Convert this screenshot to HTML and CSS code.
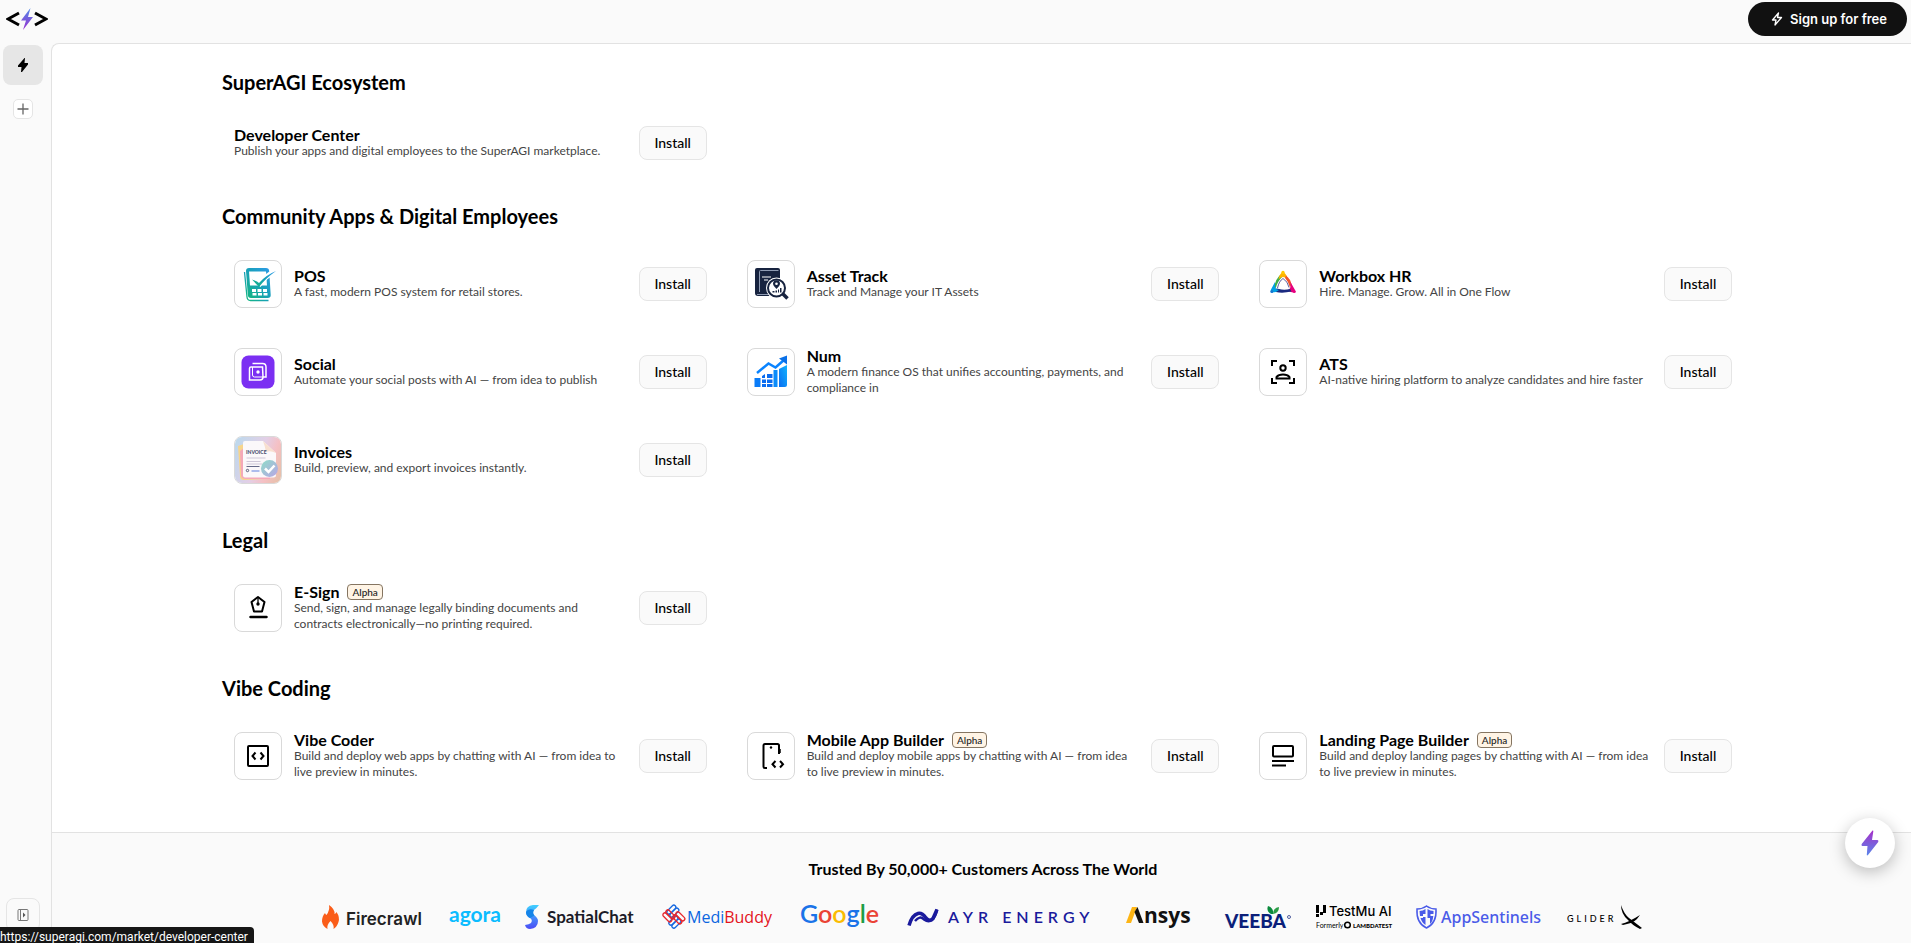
FILE: index.html
```html
<!DOCTYPE html>
<html lang="en">
<head>
    <meta charset="utf-8">
    <title>SuperAGI Marketplace</title>
    <link rel="stylesheet" href="styles.css">
</head>
<body>
<header class="topbar">
    <a href="#" class="logo" aria-label="Home">
        <svg width="42" height="24" viewBox="0 0 42 24">
            <defs>
                <linearGradient id="boltBlue" x1="0" y1="0" x2="0" y2="1">
                    <stop offset="0" stop-color="#4f8be8"/>
                    <stop offset="1" stop-color="#9b2fd0"/>
                </linearGradient>
            </defs>
            <path d="M13 6 2 12l11 6M29 6l11 6-11 6" fill="none" stroke="#000" stroke-width="3"/>
            <path d="M24.500 1 15 13.500h5L17 23l10-13h-5z" fill="url(#boltBlue)"/>
        </svg>
    </a>
    <button type="button" class="signup">
        <svg width="12" height="14" viewBox="0 0 12 14">
            <path d="M7.500 1 1.500 8h3.500L4 13l6.500-7.500H6.500z" fill="none" stroke="#fff" stroke-width="1.300" stroke-linejoin="round"/>
        </svg>
        Sign up for free
    </button>
</header>

<div class="layout">
    <nav class="sidebar">
        <a href="#" class="nav-active" aria-label="Marketplace">
            <svg width="12" height="16" viewBox="0 0 12 16">
                <path d="M7.500 1 1 8.500V10h3.500L4 15h1l6-7.500V6H7.500l.5-5z" fill="#000"/>
            </svg>
        </a>
        <button type="button" class="nav-add" aria-label="Add app">
            <svg width="12" height="12" viewBox="0 0 12 12">
                <path d="M6 .5v11M.5 6h11" fill="none" stroke="#666" stroke-width="1.300"/>
            </svg>
        </button>
        <button type="button" class="nav-toggle" aria-label="Expand sidebar">
            <svg width="12" height="14" viewBox="0 0 12 14">
                <rect x="1" y="1.500" width="10" height="11" rx="1" fill="none" stroke="#777"/>
                <path d="M3.500 1.500v11" stroke="#777"/>
                <path d="M6 4.500 8.500 7 6 9.500z" fill="#555"/>
            </svg>
        </button>
    </nav>

    <main class="content">
        <div class="market">
            <section class="group">
                <h2>SuperAGI Ecosystem</h2>
                <div class="grid">
                    <article class="app">
                        <div class="info">
                            <h3>Developer Center</h3>
                            <p>Publish your apps and digital employees to the SuperAGI marketplace.</p>
                        </div>
                        <button type="button" class="install">Install</button>
                    </article>
                </div>
            </section>

            <section class="group">
                <h2>Community Apps &amp; Digital Employees</h2>
                <div class="grid">
                    <article class="app">
                        <div class="icon">
                            <svg viewBox="0 0 48 48">
                                <defs>
                                    <linearGradient id="pos" x1="1" y1="0" x2="0" y2="1">
                                        <stop offset="0" stop-color="#2f9bea"/>
                                        <stop offset=".5" stop-color="#17a0b8"/>
                                        <stop offset="1" stop-color="#14b87c"/>
                                    </linearGradient>
                                </defs>
                                <path d="M10.500 12l2.500 25q.3 3.500 3.500 3.500h18" fill="none" stroke="url(#pos)" stroke-width="1.300"/>
                                <path d="M15 8h17q3 0 3.200 3l1.500 24q.2 3-3 3H17q-3 0-3.200-3L12 11q0-3 3-3z" fill="url(#pos)"/>
                                <path d="M15 11.500h17l1 14H16z" fill="#fff"/>
                                <path d="M24.500 25.500q6-9 17-14.500" fill="none" stroke="#fff" stroke-width="5"/>
                                <path d="M18 19.500l5 2 2 1.500q7-8 17-12-10 7-17 16z" fill="url(#pos)"/>
                                <path d="M18 29h4v3h-4zM23.500 29h4v3h-4zM29 29h4v3h-4zM18.500 33h4v2.500h-4zM24 33h4v2.500h-4zM29.500 33h4v2.500h-4z" fill="#fff"/>
                            </svg>
                        </div>
                        <div class="info">
                            <h3>POS</h3>
                            <p>A fast, modern POS system for retail stores.</p>
                        </div>
                        <button type="button" class="install">Install</button>
                    </article>
                    <article class="app">
                        <div class="icon">
                            <svg viewBox="0 0 48 48">
                                <path d="M10 8h21q2 0 2 2v26H11q-3 0-3-3V10q0-2 2-2z" fill="#17233f"/>
                                <path d="M12.500 32V11.500q0-1 1-1h18M10 34.500h12" fill="none" stroke="#8f9bb3"/>
                                <path d="M15 17h9M17 20h4" stroke="#fff" stroke-width="1.200"/>
                                <path d="M36 34l4.500 4.500" stroke="#fff" stroke-width="6"/>
                                <circle cx="29.500" cy="28" r="10.500" fill="#fff"/>
                                <path d="M36 34l4.500 4.500" stroke="#17233f" stroke-width="3.500"/>
                                <circle cx="29.500" cy="28" r="8.500" fill="#fff" stroke="#17233f" stroke-width="2"/>
                                <path d="M29.500 29q-3.500-3.500-3.500-5.200a3.500 3.500 0 0 1 7 0q0 1.700-3.500 5.200z" fill="#17233f"/>
                                <circle cx="29.500" cy="23.800" r="1.300" fill="#fff"/>
                                <path d="M25.500 31h2v1.500h-2zM28.500 30.500h1.500v2h-1.500zM31 29.500h1v3h-1zM33 28h1.500v4.500H33z" fill="#17233f"/>
                            </svg>
                        </div>
                        <div class="info">
                            <h3>Asset Track</h3>
                            <p>Track and Manage your IT Assets</p>
                        </div>
                        <button type="button" class="install">Install</button>
                    </article>
                    <article class="app">
                        <div class="icon">
                            <svg viewBox="0 0 48 48">
                                <path d="M20.500 15.500l3 1q-5 5-6.500 11l-4.500 2.500 3-5q1-5 5-9.500z" fill="#3fae49"/>
                                <path d="M20.500 15.500q1.500-3 3.500-3t3.500 3l1.500 4q-2.500-2.500-5-2.500-3 0-4.500 2.500z" fill="#ffb400"/>
                                <path d="M27 15.500q4.500 3.500 5.500 9l-1.500 3q-1.500-6-5-9.500z" fill="#f0542d"/>
                                <path d="M31.500 22l4.500 8q.5 2.500-2 2.500l-6-1.500q3-1.500 3.500-4z" fill="#e6007e"/>
                                <path d="M13 31q4-3.500 7-2 5 1.500 11 0l1.500 2.500q-9 2-15.500.5z" fill="#1b2a80"/>
                                <path d="M16 22q-.500 4 1 7l3 1q-3 2.500-6.500 2.500-2.500-.5-1.500-3z" fill="#00a0e3"/>
                                <path d="M24 18.500q-4 2.500-5.500 9.500M24 18.500q5 3 6 9" fill="none" stroke="#333a88" stroke-width=".8"/>
                                <circle cx="24" cy="12.500" r="1.700" fill="#ffc800"/>
                                <circle cx="12.800" cy="31.500" r="1.500" fill="#1477d0"/>
                                <circle cx="35.300" cy="31.500" r="1.500" fill="#e6007e"/>
                            </svg>
                        </div>
                        <div class="info">
                            <h3>Workbox HR</h3>
                            <p>Hire. Manage. Grow. All in One Flow</p>
                        </div>
                        <button type="button" class="install">Install</button>
                    </article>
                    <article class="app">
                        <div class="icon">
                            <svg viewBox="0 0 48 48">
                                <rect x="7.500" y="7.500" width="33" height="33" rx="7" fill="#7b2ff2"/>
                                <g fill="none" stroke="#fff" stroke-width="1.500">
                                    <path d="M18.500 15.500h10q3.500 0 3.500 3.500v10h-3"/>
                                    <path d="M28.500 19H17q-1.500 0-1.500 1.500V32H26q3 0 3-3z"/>
                                    <path d="M18.500 19v8q0 2 2 2h8.500" stroke-width="1"/>
                                </g>
                                <circle cx="24" cy="24" r="1.700" fill="#fff"/>
                            </svg>
                        </div>
                        <div class="info">
                            <h3>Social</h3>
                            <p>Automate your social posts with AI — from idea to publish</p>
                        </div>
                        <button type="button" class="install">Install</button>
                    </article>
                    <article class="app">
                        <div class="icon">
                            <svg viewBox="0 0 48 48">
                                <defs>
                                    <linearGradient id="num" x1="0" y1="1" x2="1" y2="0">
                                        <stop offset="0" stop-color="#0a6cf0"/>
                                        <stop offset="1" stop-color="#12b4ff"/>
                                    </linearGradient>
                                </defs>
                                <path d="M7.500 30h6v9h-6z" fill="#0a7cf8"/>
                                <path d="M15 28l3-2v4h-3zM15 31.500h4V35h-4zM15 36h4v3h-4zM20 26h5.500v4H20zM20 31.500h5.500V35H20zM20 36h5.500v3H20z" fill="#0a6cf0"/>
                                <path d="M26.500 22h4v17h-4z" fill="#0a8cfa"/>
                                <path d="M32 21l8-4v20q0 2-2 2h-6z" fill="url(#num)"/>
                                <path d="M10 25l11.500-9.500 7 4L37 12" fill="none" stroke="#0a84ff" stroke-width="2.500"/>
                                <path d="M32 10.500l8-3v9z" fill="#0a70e8"/>
                            </svg>
                        </div>
                        <div class="info">
                            <h3>Num</h3>
                            <p>A modern finance OS that unifies accounting, payments, and compliance in</p>
                        </div>
                        <button type="button" class="install">Install</button>
                    </article>
                    <article class="app">
                        <div class="icon">
                            <svg viewBox="0 0 48 48" fill="none" stroke="#000" stroke-width="2">
                                <path d="M13 18v-5h5M30 13h5v5M35 30v5h-5M18 35h-5v-5"/>
                                <circle cx="24" cy="20" r="2.700"/>
                                <path d="M17.500 30.500h13v-1.500q-2-2.500-6.500-2.500t-6.500 2.500z"/>
                            </svg>
                        </div>
                        <div class="info">
                            <h3>ATS</h3>
                            <p>AI-native hiring platform to analyze candidates and hire faster</p>
                        </div>
                        <button type="button" class="install">Install</button>
                    </article>
                    <article class="app">
                        <div class="icon">
                            <svg viewBox="0 0 48 48">
                                <defs>
                                    <linearGradient id="inv" x1="0" y1=".3" x2="1" y2=".7">
                                        <stop offset="0" stop-color="#bfd8ec"/>
                                        <stop offset=".5" stop-color="#e3cfe6"/>
                                        <stop offset=".75" stop-color="#f5c0c4"/>
                                        <stop offset="1" stop-color="#e8c0ac"/>
                                    </linearGradient>
                                    <linearGradient id="tick" x1="0" y1="0" x2="1" y2="1">
                                        <stop offset="0" stop-color="#8fdcc8"/>
                                        <stop offset="1" stop-color="#b9a5e6"/>
                                    </linearGradient>
                                </defs>
                                <rect width="48" height="48" fill="url(#inv)"/>
                                <path d="M4 10l6-2v31h24l-1 4-23 1q-4 0-4-4z" fill="#f6d58c"/>
                                <path d="M6 15l4-3v29h26v2H12q-5 0-5-4z" fill="#f5a9b8"/>
                                <path d="M11 5h18l13 12v22q0 2.500-2.500 2.500H11q-2 0-2-2V7q0-2 2-2z" fill="#fbf8fa"/>
                                <path d="M29 5l13 12q-6-3-10-1-1-6-3-11z" fill="#f8dfcf"/>
                                <path d="M12.500 22h19M12.500 25.500h14M12.500 28h16" stroke="#cfc8d8"/>
                                <path d="M12.500 30.500h13" stroke="#666a88"/>
                                <path d="M17.500 35h8" stroke="#93a9e8" stroke-width="1.500"/>
                                <circle cx="13.500" cy="34.500" r="1.200" fill="none" stroke="#555a78"/>
                                <circle cx="35.500" cy="32.500" r="8.500" fill="url(#tick)"/>
                                <path d="M31 32.500l3.500 3.500 6-6.500" fill="none" stroke="#fff" stroke-width="2.500"/>
                                <text x="12" y="18" class="invoice-word">INVOICE</text>
                            </svg>
                        </div>
                        <div class="info">
                            <h3>Invoices</h3>
                            <p>Build, preview, and export invoices instantly.</p>
                        </div>
                        <button type="button" class="install">Install</button>
                    </article>
                </div>
            </section>

            <section class="group">
                <h2>Legal</h2>
                <div class="grid">
                    <article class="app">
                        <div class="icon">
                            <svg viewBox="0 0 48 48" fill="none" stroke="#000" stroke-width="2">
                                <path d="M24 13l6.500 5-2.500 9.500h-8L17.500 18z" stroke-linejoin="round"/>
                                <path d="M24 13v6" stroke-width="1.300"/>
                                <circle cx="24" cy="20" r="1.700" fill="#000" stroke="none"/>
                                <path d="M16.500 33h16" stroke-width="2.500" stroke-linecap="round"/>
                            </svg>
                        </div>
                        <div class="info">
                            <h3>E-Sign <span class="badge">Alpha</span></h3>
                            <p>Send, sign, and manage legally binding documents and contracts electronically—no printing required.</p>
                        </div>
                        <button type="button" class="install">Install</button>
                    </article>
                </div>
            </section>

            <section class="group">
                <h2>Vibe Coding</h2>
                <div class="grid">
                    <article class="app">
                        <div class="icon">
                            <svg viewBox="0 0 48 48" fill="none" stroke="#000" stroke-width="2">
                                <rect x="14" y="14" width="20" height="20" rx="1"/>
                                <path d="M21.500 20.500L18.500 24l3 3.500M26.500 20.500l3 3.500-3 3.500"/>
                            </svg>
                        </div>
                        <div class="info">
                            <h3>Vibe Coder</h3>
                            <p>Build and deploy web apps by chatting with AI — from idea to live preview in minutes.</p>
                        </div>
                        <button type="button" class="install">Install</button>
                    </article>
                    <article class="app">
                        <div class="icon">
                            <svg viewBox="0 0 48 48" fill="none" stroke="#000" stroke-width="2">
                                <path d="M20 36h-2q-1.500 0-1.500-1.500v-21q0-1.500 1.500-1.500h12.500q1.500 0 1.500 1.500V22"/>
                                <path d="M33 17v4" stroke-width="1.500"/>
                                <circle cx="24" cy="15.500" r="1.200" fill="#000" stroke="none"/>
                                <path d="M28.500 29l-3 3.200 3 3.300M33 29l3 3.200-3 3.300"/>
                            </svg>
                        </div>
                        <div class="info">
                            <h3>Mobile App Builder <span class="badge">Alpha</span></h3>
                            <p>Build and deploy mobile apps by chatting with AI — from idea to live preview in minutes.</p>
                        </div>
                        <button type="button" class="install">Install</button>
                    </article>
                    <article class="app">
                        <div class="icon">
                            <svg viewBox="0 0 48 48" fill="none" stroke="#000" stroke-width="2">
                                <rect x="14" y="14" width="20" height="10.500" rx="1"/>
                                <path d="M13 29h22M13 33.500h14"/>
                            </svg>
                        </div>
                        <div class="info">
                            <h3>Landing Page Builder <span class="badge">Alpha</span></h3>
                            <p>Build and deploy landing pages by chatting with AI — from idea to live preview in minutes.</p>
                        </div>
                        <button type="button" class="install">Install</button>
                    </article>
                </div>
            </section>
        </div>

        <footer class="trusted">
            <h4>Trusted By 50,000+ Customers Across The World</h4>
            <div class="brands">
                <svg width="103" height="24" viewBox="0 0 103 24">
                    <path d="M7 0q6 4 5.500 9 1.500-.5 2-2 3.500 5 2 10-1.500 5-5 7 1-4-3-8-4 4-3 8-5-3-5.500-7.500Q0 11 3 8q.5 1.500 1.500 2Q8 5 7 0z" fill="#fa5d19"/>
                    <text x="24" y="20" class="firecrawl">Firecrawl</text>
                </svg>
                <svg width="52" height="24" viewBox="0 0 52 24">
                    <text x="0" y="17" class="agora">agora</text>
                </svg>
                <svg width="112" height="24" viewBox="0 0 112 24">
                    <defs>
                        <linearGradient id="spa" x1="0" y1="0" x2="0" y2="1">
                            <stop offset="0" stop-color="#3fd0ff"/>
                            <stop offset="1" stop-color="#4b4bf5"/>
                        </linearGradient>
                    </defs>
                    <path d="M14 0H8Q1 1 1 7q0 4 4 6 3 2 1 5-2 1.500-6 2 1 4 5 4 8-1 8-8 0-3-3.500-5.500Q7 8 9 5q2-1 5-5z" fill="url(#spa)"/>
                    <path d="M1 7q2-4 8-2-2 3 .5 5.500L5 13Q1 11 1 7z" fill="#1584e8"/>
                    <text x="22" y="18" class="spatial">SpatialChat</text>
                </svg>
                <svg width="113" height="24" viewBox="0 0 113 24">
                    <g fill="none" stroke-width="1.300">
                        <g stroke="#1769e0">
                            <rect x="5" y="3" width="11" height="4" rx="2" transform="rotate(-45 10 5)"/>
                            <rect x="8" y="6" width="11" height="4" rx="2" transform="rotate(-45 13 8)"/>
                            <rect x="7" y="14" width="11" height="4" rx="2" transform="rotate(-45 12 16)"/>
                            <rect x="10" y="17" width="11" height="4" rx="2" transform="rotate(-45 15 19)"/>
                        </g>
                        <g stroke="#e8262d">
                            <rect x="1" y="10" width="11" height="4" rx="2" transform="rotate(45 6 12)"/>
                            <rect x="4" y="7" width="11" height="4" rx="2" transform="rotate(45 9 9)"/>
                            <rect x="11" y="12" width="11" height="4" rx="2" transform="rotate(45 16 14)"/>
                            <rect x="14" y="9" width="11" height="4" rx="2" transform="rotate(45 19 11)"/>
                        </g>
                    </g>
                    <text x="26" y="18" class="medi"><tspan fill="#0a66e0">Medi</tspan><tspan fill="#e3131b">Buddy</tspan></text>
                </svg>
                <svg width="83" height="24" viewBox="0 0 83 24">
                    <text x="2" y="18" class="google"><tspan fill="#1a73e8">G</tspan><tspan fill="#ea4335">o</tspan><tspan fill="#fbbc04">o</tspan><tspan fill="#1a73e8">g</tspan><tspan fill="#1e9e45">l</tspan><tspan fill="#ea4335">e</tspan></text>
                </svg>
                <svg width="194" height="24" viewBox="0 0 194 24">
                    <path d="M4 20.500Q7 10 13 8.500q4-1 8 4.500 4 4 7 .5L32 4.500" fill="none" stroke="#1a1a9c" stroke-width="3.500"/>
                    <path d="M10 16q5-6 9-1.500 5 3.500 8 0 4-3 5-10" fill="none" stroke="#1a1a9c" stroke-width="2.500"/>
                    <text x="43" y="18" class="ayr">AYR ENERGY</text>
                </svg>
                <svg width="75" height="24" viewBox="0 0 75 24">
                    <path d="M3 18h5l6-16H9z" fill="#fdb515"/>
                    <path d="M11.500 7l3-5 6 16h-4.500z" fill="#111"/>
                    <text x="21" y="18" class="ansys" aria-label="Ansys">nsys</text>
                </svg>
                <svg width="70" height="24" viewBox="0 0 70 24">
                    <path d="M49 9Q44 6 46 1q6 2 5 8z" fill="#0b8a3c"/>
                    <path d="M51 9q0-6 6-7 0 6-6 7z" fill="#2a9d45"/>
                    <text x="3" y="23" class="veeba">VEEBA</text>
                    <circle cx="67" cy="12" r="1.500" fill="none" stroke="#0b1f7a" stroke-width=".7"/>
                </svg>
                <svg width="76" height="24" viewBox="0 0 76 24">
                    <path d="M0 0h3v8H0zM0 9h3v3H0zM4 7h3v3H4zM7 0h3v8H7z" fill="#000"/>
                    <text x="13" y="11" class="testmu">TestMu AI</text>
                    <text x="0" y="23" class="formerly">Formerly</text>
                    <circle cx="31.500" cy="20" r="2.800" fill="none" stroke="#000" stroke-width="1.500"/>
                    <text x="37" y="23" class="lambda">LAMBDATEST</text>
                </svg>
                <svg width="127" height="24" viewBox="0 0 127 24">
                    <path d="M10.500 1q4 3 9.500 3 1 14-9.500 19Q0 18 1 4q5.500 0 9.500-3z" fill="none" stroke="#4a5be8" stroke-width="1.500"/>
                    <path d="M9.500 4v5H7v3h2.500v8Q6 18 4.500 13H7v-2H4L3.500 6q3.500 0 6-2zM11.500 4q2.500 2 6 2v3h-3v2h2.800q-.6 6-3.300 8v-6h-2.500z" fill="#4a5be8"/>
                    <text x="25" y="18" class="sentinels">AppSentinels</text>
                </svg>
                <svg width="78" height="24" viewBox="0 0 78 24">
                    <text x="0" y="17" class="glider">GLIDER</text>
                    <path d="M54 0q3 9 8 13l13 10-2 1q-8-4-12-9Q54 9 54 0z" fill="#000"/>
                    <path d="M54 19q8-2 19-9-5 8-13 9l-4 1z" fill="#000"/>
                </svg>
            </div>
        </footer>
    </main>
</div>

<button type="button" class="assistant" aria-label="Open assistant">
    <svg width="18" height="26" viewBox="0 0 18 26">
        <defs>
            <linearGradient id="boltPurple" x1="0" y1="0" x2="0" y2="1">
                <stop offset="0" stop-color="#a62fc8"/>
                <stop offset="1" stop-color="#5a86ea"/>
            </linearGradient>
        </defs>
        <path d="M11.500.5Q12.500 0 12.300 1.500L11 10h5.500q1.500.5.700 2L7 25q-1.200 1-1.200-.5L6.500 16H1.200Q0 15.500.700 14z" fill="url(#boltPurple)"/>
    </svg>
</button>
<div class="status">https://superagi.com/market/developer-center</div>
</body>
</html>
```
FILE: styles.css
```css
* {
    box-sizing: border-box;
    margin: 0;
    padding: 0;
}
body {
    height: 100vh;
    display: flex;
    flex-direction: column;
    overflow: hidden;
    background-color: #fafafa;
    color: #000;
    font-family: Lato, sans-serif;
    font-size: 14px;
}
button {
    cursor: pointer;
    font-family: inherit;
}
svg {
    display: block;
    flex-shrink: 0;
}

/* top bar */
.topbar {
    display: flex;
    justify-content: space-between;
    align-items: flex-start;
    height: 43px;
    padding: 2px 4px 0 6px;
}
.logo {
    margin-top: 5px;
}
.signup {
    display: flex;
    align-items: center;
    gap: 7px;
    height: 34px;
    padding: 0 20px 0 23px;
    border: none;
    border-radius: 17px;
    background-color: #111;
    color: #fff;
    font-family: Inter, sans-serif;
    font-size: 13px;
    font-weight: 600;
}

/* sidebar */
.layout {
    display: flex;
    flex: 1;
    min-height: 0;
}
.sidebar {
    display: flex;
    flex-direction: column;
    align-items: center;
    width: 51px;
    padding: 2px 5px 11px 0;
}
.nav-active {
    display: flex;
    align-items: center;
    justify-content: center;
    width: 40px;
    height: 40px;
    border-radius: 8px;
    background-color: #e6e6e6;
}
.nav-add {
    display: flex;
    align-items: center;
    justify-content: center;
    width: 20px;
    height: 20px;
    margin-top: 14px;
    border: 1px solid #e5e5e5;
    border-radius: 5px;
    background-color: #fff;
}
.nav-toggle {
    display: flex;
    align-items: center;
    justify-content: center;
    width: 34px;
    height: 34px;
    margin-top: auto;
    border: 1px solid #e5e5e5;
    border-radius: 8px;
    background-color: #fafafa;
}

/* marketplace */
.content {
    flex: 1;
    min-width: 0;
    overflow: hidden;
    border-top: 1px solid #e2e2e2;
    border-left: 1px solid #e2e2e2;
    border-top-left-radius: 8px;
    background-color: #fff;
}
.market {
    padding: 24px 167px 10px 170px;
}
.group {
    margin-bottom: 30px;
}
.group h2 {
    margin-bottom: 18px;
    font-size: 20px;
    font-weight: 700;
    line-height: 28px;
}
.grid {
    display: grid;
    grid-template-columns: repeat(3, 1fr);
    gap: 16px;
}
.app {
    display: flex;
    align-items: center;
    gap: 12px;
    padding: 12px;
}
.icon {
    flex-shrink: 0;
    width: 48px;
    height: 48px;
    border: 1px solid #d9d9d9;
    border-radius: 8px;
    overflow: hidden;
}
.icon svg {
    width: 48px;
    height: 48px;
    margin: -1px;
}
.invoice-word {
    font-size: 5px;
    font-weight: 900;
    fill: #4a4e6e;
}
.info {
    flex: 1;
}
.info h3 {
    display: flex;
    align-items: center;
    gap: 8px;
    font-size: 16px;
    font-weight: 700;
    line-height: 16px;
}
.info p {
    color: #444;
    font-size: 12px;
    line-height: 16px;
}
.badge {
    height: 16px;
    padding: 0 4px;
    border: 1px solid #857561;
    border-radius: 4px;
    background-color: #fff4e5;
    color: #222;
    font-size: 10px;
    font-weight: 500;
    line-height: 14px;
}
.install {
    flex-shrink: 0;
    width: 68px;
    height: 34px;
    padding-bottom: 2px;
    border: 1px solid #e5e5e5;
    border-radius: 8px;
    background-color: #fafafa;
    color: #000;
    font-size: 14px;
    font-weight: 500;
}

/* customers */
.trusted {
    padding: 24px 0 14px 3px;
    border-top: 1px solid #e2e2e2;
    background-color: #fafafa;
}
.trusted h4 {
    margin-bottom: 24px;
    font-size: 16px;
    font-weight: 700;
    line-height: 24px;
    text-align: center;
}
.brands {
    display: flex;
    justify-content: center;
    gap: 24px;
}
.brands svg {
    overflow: visible;
}
.firecrawl {
    font-family: Inter, sans-serif;
    font-size: 17px;
    font-weight: 600;
    fill: #222;
}
.agora {
    font-size: 21px;
    font-weight: 700;
    fill: #0bbcff;
}
.spatial {
    font-size: 17px;
    font-weight: 700;
    fill: #1c1c28;
}
.medi {
    font-family: "Open Sans", sans-serif;
    font-size: 16px;
}
.google {
    font-size: 25px;
    font-weight: 600;
}
.ayr {
    font-size: 16px;
    font-weight: 600;
    letter-spacing: 5px;
    fill: #1a1a9c;
}
.ansys {
    font-family: "Open Sans", sans-serif;
    font-size: 21px;
    font-weight: 700;
    fill: #111;
}
.veeba {
    font-size: 19px;
    font-weight: 900;
    fill: #0b1f7a;
}
.testmu {
    font-family: Inter, sans-serif;
    font-size: 13px;
    font-weight: 500;
}
.formerly {
    font-size: 7px;
}
.lambda {
    font-size: 6px;
    font-weight: 900;
}
.sentinels {
    font-family: "Noto Sans", sans-serif;
    font-size: 16px;
    font-weight: 500;
    fill: #4a5be8;
}
.glider {
    font-size: 9px;
    font-weight: 500;
    letter-spacing: 3px;
}

/* floating */
.assistant {
    position: absolute;
    right: 16px;
    bottom: 75px;
    display: flex;
    align-items: center;
    justify-content: center;
    width: 50px;
    height: 50px;
    border: none;
    border-radius: 50%;
    background-color: #fff;
    box-shadow: 0 4px 16px rgba(0, 0, 0, .25);
}
.status {
    position: absolute;
    left: 0;
    bottom: 0;
    height: 16px;
    padding: 0 6px 0 0;
    border-top-right-radius: 4px;
    background-color: #161616;
    color: #fff;
    font-family: Roboto, sans-serif;
    font-size: 12px;
    line-height: 20px;
}
```
